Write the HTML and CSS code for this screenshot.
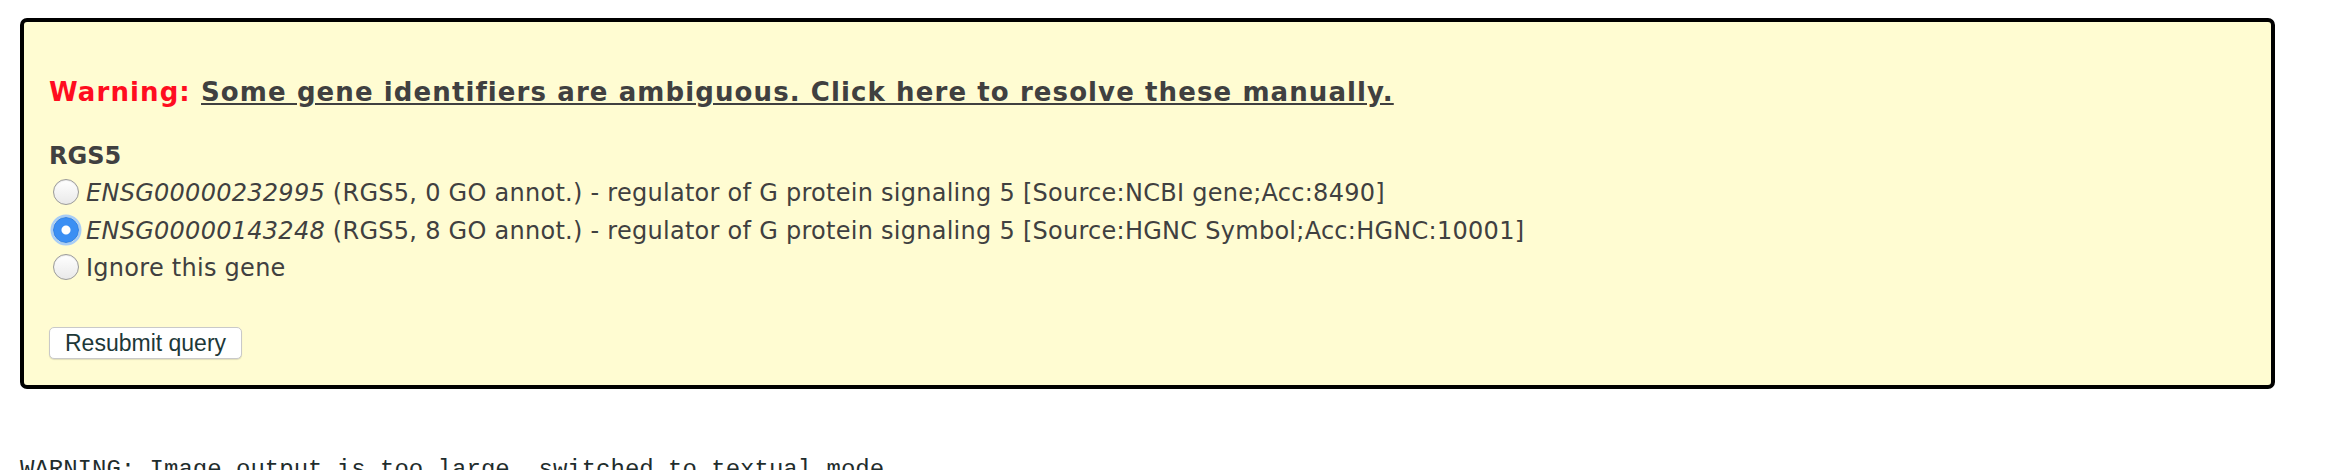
FILE: index.html
```html
<!DOCTYPE html>
<html>
<head>
<meta charset="utf-8">
<link rel="stylesheet" href="styles.css">
</head>
<body>
<div class="page">
  <form class="ambig">
    <div class="title"><span class="warn">Warning:</span> <a class="resolve" href="#">Some gene identifiers are ambiguous. Click here to resolve these manually.</a></div>
    <div class="gene">RGS5</div>
    <label class="opt"><input type="radio" name="g1" class="radio"><span><i>ENSG00000232995</i> (RGS5, 0 GO annot.) - regulator of G protein signaling 5 [Source:NCBI gene;Acc:8490]</span></label>
    <label class="opt"><input type="radio" name="g1" class="radio" checked><span><i>ENSG00000143248</i> (RGS5, 8 GO annot.) - regulator of G protein signaling 5 [Source:HGNC Symbol;Acc:HGNC:10001]</span></label>
    <label class="opt"><input type="radio" name="g1" class="radio"><span>Ignore this gene</span></label>
    <button type="button" class="btn">Resubmit query</button>
  </form>
  <pre class="mono">WARNING: Image output is too large, switched to textual mode.</pre>
</div>
</body>
</html>
```

FILE: styles.css
```css
html, body {
  margin: 0;
  padding: 0;
  background: #ffffff;
}
.page {
  padding: 18px 20px 0 20px;
}
.ambig {
  box-sizing: border-box;
  width: 2255px;
  height: 371px;
  border: 4px solid #000;
  border-radius: 7px;
  background: #fffcd2;
  padding: 54px 25px 0 25px;
  font-family: "DejaVu Sans", Verdana, sans-serif;
  color: #404040;
  display: flex;
  flex-direction: column;
  align-items: flex-start;
}
.title {
  font-size: 26px;
  font-weight: bold;
  line-height: 32px;
  height: 32px;
  letter-spacing: 1.1px;
  white-space: nowrap;
}
.warn {
  color: #ff0d1f;
}
.resolve {
  color: #404040;
  text-decoration: underline;
}
.gene {
  margin-top: 33px;
  font-size: 24px;
  font-weight: bold;
  line-height: 30px;
  height: 30px;
}
.opt {
  display: flex;
  align-items: center;
  font-size: 24px;
  line-height: 37.5px;
  height: 37.5px;
  letter-spacing: 0.27px;
  white-space: nowrap;
}
.opt:first-of-type {
  margin-top: 4px;
}
.radio {
  appearance: none;
  -webkit-appearance: none;
  box-sizing: border-box;
  width: 26px;
  height: 26px;
  margin: -3px 7px 0 4px;
  border-radius: 50%;
  border: 1px solid #9a9a9a;
  background: linear-gradient(#ffffff, #e9e9e9);
  box-shadow: inset 0 1px 1px rgba(0,0,0,0.08);
  flex: none;
}
.radio:checked {
  border: 1px solid #2f7fe6;
  background: radial-gradient(circle, #ffffff 0 4px, #3b8ff3 5px);
  box-shadow: 0 0 0 2.5px #a8cdf6;
}
.btn {
  margin-top: 39px;
  height: 32px;
  padding: 0 15px;
  font-family: "Liberation Sans", Arial, sans-serif;
  font-size: 23px;
  color: #1d3838;
  background: #ffffff;
  border: 1px solid #c9c9c9;
  border-radius: 5px;
  box-shadow: 0 1px 1px rgba(0,0,0,0.12);
  line-height: 30px;
}
.mono {
  margin: 67px 0 0 0;
  font-family: "Liberation Mono", "Courier New", monospace;
  font-size: 24px;
  color: #1f2d2d;
}
```
